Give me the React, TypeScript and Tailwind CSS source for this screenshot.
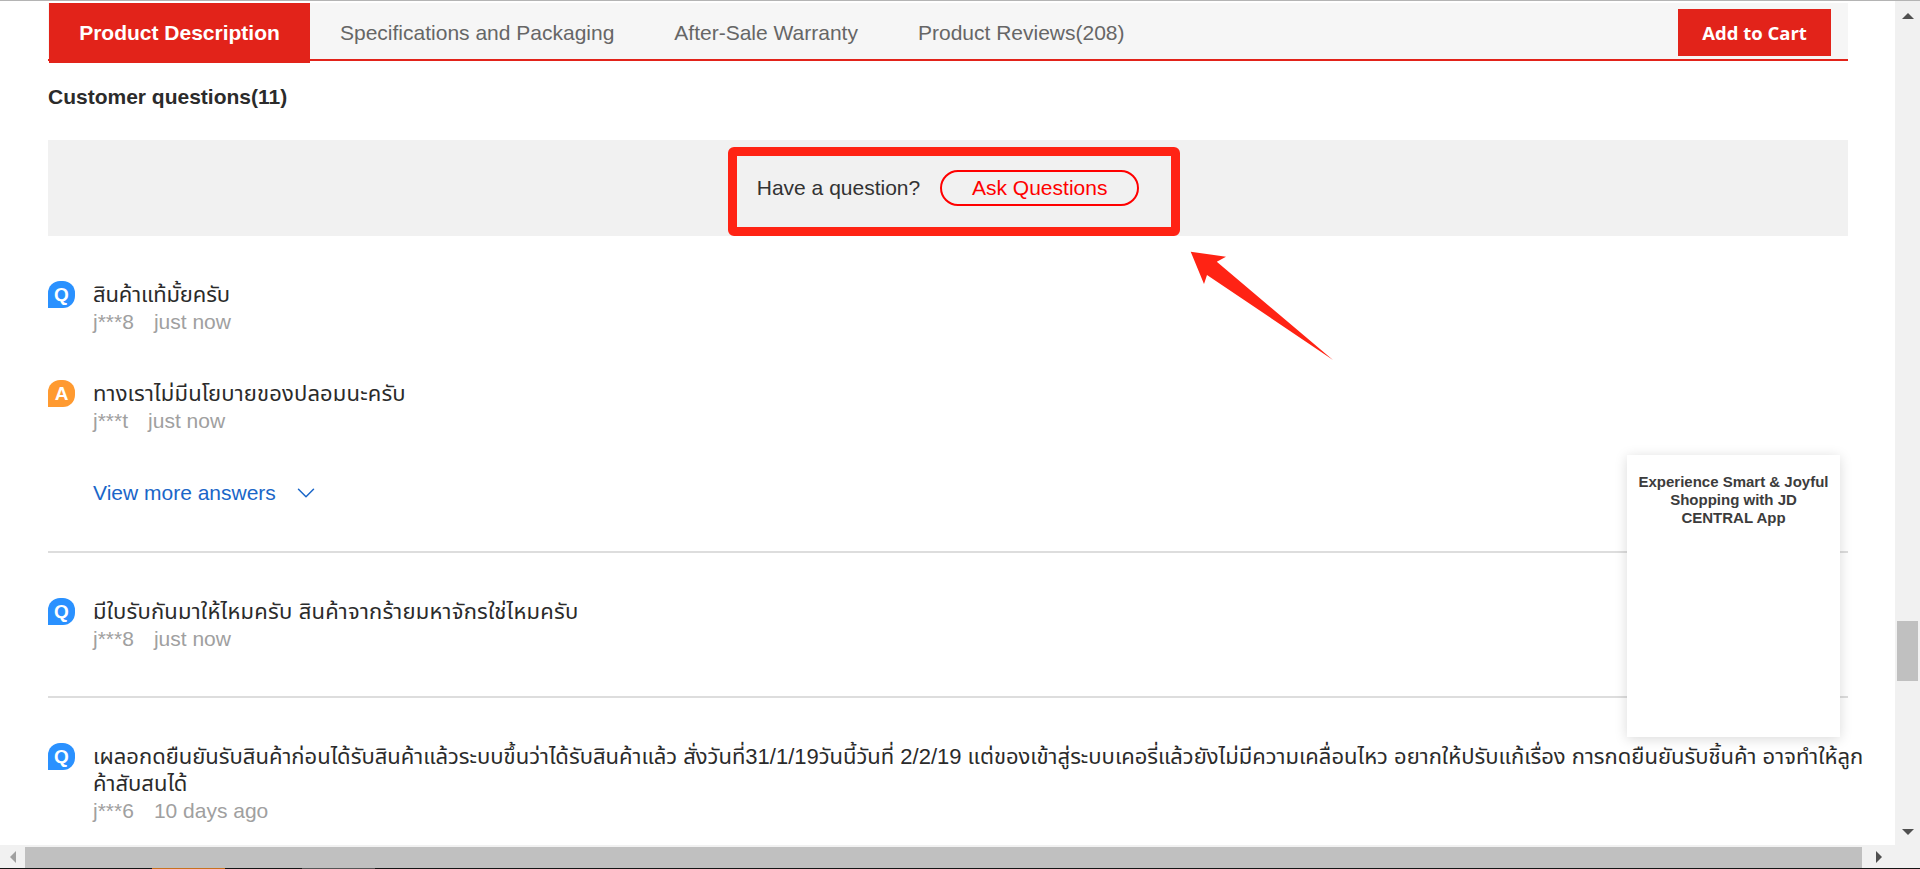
import React from "react";
import { ChevronDown } from "lucide-react";

const thai = { fontFamily: '"Liberation Sans", "Noto Sans Thai", "Noto Sans", "DejaVu Sans", sans-serif' };

function Badge({ kind }: { kind: "Q" | "A" }) {
  return (
    <div
      className={`flex h-[27px] w-[27px] shrink-0 items-center justify-center rounded-[12px] rounded-bl-none text-[19px] leading-none font-bold text-white ${
        kind === "Q" ? "bg-[#2a91ff]" : "bg-[#ff9a30]"
      }`}
    >
      {kind}
    </div>
  );
}

function Item({ kind, lines, user, time, track }: { kind: "Q" | "A"; lines: string[]; user: string; time: string; track: string }) {
  return (
    <div className="flex gap-[18px]">
      <Badge kind={kind} />
      <div className="text-[21px] leading-[27px]">
        {lines.map((l) => (
          <div key={l} className={`whitespace-nowrap text-[22px] text-[#2b2b2b] ${track}`}>
            {l}
          </div>
        ))}
        <div className="flex text-[#a0a0a0]">
          <span className="mr-[20px]">{user}</span>
          <span>{time}</span>
        </div>
      </div>
    </div>
  );
}

export default function App() {
  return (
    <div className="flex h-[869px] w-[1920px] flex-col overflow-hidden bg-white" style={thai}>
      <div className="h-[1px] shrink-0 bg-[#b4b4b4]" />
      <div className="flex min-h-0 flex-1">
        <div className="relative min-w-0 flex-1">
          <div className="pt-[2px] pl-[48px]">
            <div className="w-[1800px]">
              <div className="flex h-[58px] items-stretch border-b-[2px] border-[#e2231a] bg-[#f6f6f6] pr-[17px] text-[21px] text-[#666]">
                <div className="ml-[1px] flex h-[60px] w-[261px] items-center justify-center bg-[#e2231a] font-bold text-white">
                  Product Description
                </div>
                <div className="ml-[30px] flex gap-[60px] pt-[3px]">
                  <span className="flex items-center">Specifications and Packaging</span>
                  <span className="flex items-center">After-Sale Warranty</span>
                  <span className="flex items-center">Product Reviews(208)</span>
                </div>
                <div className="mt-[6px] mb-[3px] ml-auto flex w-[153px] items-center justify-center bg-[#e2231a] font-['Open_Sans'] text-[18.5px] font-bold text-white">
                  Add to Cart
                </div>
              </div>

              <div className="mt-[21px] text-[21px] leading-[30px] font-bold text-[#2b2b2b]">Customer questions(11)</div>

              <div className="mt-[28px] flex h-[96px] items-center justify-center bg-[#f1f1f1] pl-[6px]">
                <div className="flex items-center gap-[20px] pr-[6px]">
                  <span className="text-[21px] text-[#333]">Have a question?</span>
                  <span className="flex h-[36px] w-[199px] items-center justify-center rounded-full border-2 border-[#f00] text-[21px] text-[#f00]">
                    Ask Questions
                  </span>
                </div>
              </div>

              <div className="mt-[45px] flex flex-col gap-[45px]">
                <Item kind="Q" lines={["สินค้าแท้มั้ยครับ"]} user="j***8" time="just now" track="tracking-[-0.15px]" />
                <Item kind="A" lines={["ทางเราไม่มีนโยบายของปลอมนะครับ"]} user="j***t" time="just now" track="tracking-[0.15px]" />
              </div>

              <div className="mt-[45px] ml-[45px] flex h-[27px] items-center text-[21px] text-[#1a66c8]">
                <span>View more answers</span>
                <ChevronDown className="ml-[15px] h-[30px] w-[30px]" strokeWidth={1.2} />
              </div>

              <div className="mt-[45px] h-[2px] bg-[#ddd]" />
              <div className="mt-[45px]">
                <Item kind="Q" lines={["มีใบรับกันมาให้ไหมครับ สินค้าจากร้ายมหาจักรใช่ไหมครับ"]} user="j***8" time="just now" track="tracking-[0.2px]" />
              </div>
              <div className="mt-[44px] h-[2px] bg-[#ddd]" />
              <div className="mt-[45px]">
                <Item
                  kind="Q"
                  lines={[
                    "เผลอกดยืนยันรับสินค้าก่อนได้รับสินค้าแล้วระบบขึ้นว่าได้รับสินค้าแล้ว สั่งวันที่31/1/19วันนี้วันที่ 2/2/19 แต่ของเข้าสู่ระบบเคอรี่แล้วยังไม่มีความเคลื่อนไหว อยากให้ปรับแก้เรื่อง การกดยืนยันรับชิ้นค้า อาจทำให้ลูก",
                    "ค้าสับสนได้",
                  ]}
                  user="j***6"
                  time="10 days ago"
                  track="tracking-[0px]"
                />
              </div>
            </div>
          </div>

          {/* annotation: red frame */}
          <div className="absolute top-[146px] left-[728px] h-[89px] w-[452px] rounded-[6px] border-[9px] border-[#ff2314]" />
          {/* annotation: arrow */}
          <svg className="absolute top-[240px] left-[1180px]" width="160" height="125" viewBox="1180 240 160 125">
            <polygon points="1190.7,250.7 1226,255.7 1216.8,260.7 1333,359 1207,274 1204,283" fill="#ff2314" />
          </svg>

          {/* floating app panel */}
          <div className="absolute top-[454px] left-[1627px] h-[282px] w-[213px] bg-white px-[8px] pt-[18px] text-center text-[15px] leading-[18px] font-bold text-[#3c3c3c] shadow-[0_2px_12px_rgba(0,0,0,0.15)]">
            Experience Smart &amp; Joyful Shopping with JD CENTRAL App
          </div>
        </div>

        {/* vertical scrollbar */}
        <div className="relative flex w-[25px] shrink-0 flex-col items-center bg-[#f1f1f1]">
          <div className="mt-[12px] h-0 w-0 border-x-[6px] border-b-[6px] border-x-transparent border-b-[#505050]" />
          <div className="mt-[602px] h-[60px] w-[21px] bg-[#c0c0c0]" />
          <div className="mt-[148px] h-0 w-0 border-x-[6px] border-t-[6px] border-x-transparent border-t-[#505050]" />
        </div>
      </div>

      {/* horizontal scrollbar */}
      <div className="flex h-[23px] shrink-0 bg-[#f1f1f1]">
        <div className="flex w-[25px] items-center justify-center">
          <div className="h-0 w-0 border-y-[6px] border-r-[6px] border-y-transparent border-r-[#a0a0a0]" />
        </div>
        <div className="mt-[2px] w-[1837px] bg-[#c0c0c0]" />
        <div className="flex w-[33px] items-center justify-center">
          <div className="h-0 w-0 border-y-[6px] border-l-[6px] border-y-transparent border-l-[#505050]" />
        </div>
      </div>
      <div className="flex h-[1px] shrink-0 bg-[#141414]">
        <div className="ml-[152px] w-[73px] bg-[#c8701e]" />
        <div className="ml-[77px] w-[73px] bg-[#555]" />
      </div>
    </div>
  );
}
